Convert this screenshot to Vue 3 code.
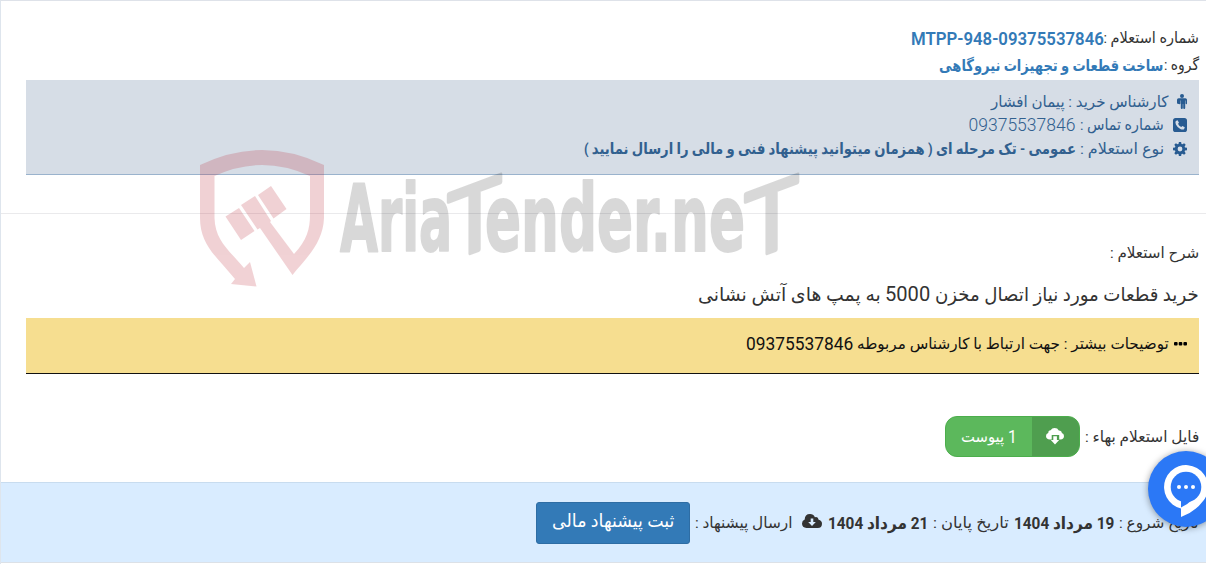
<script setup>
// Scales a run of text horizontally so that it takes the given width.
const vFit = {
  mounted(el, { value }) {
    const natural = el.offsetWidth
    if (!natural) return
    el.style.transform = `scaleX(${value / natural})`
    el.style.marginLeft = `${value - natural}px`
  },
}
</script>

<template>
  <main class="page" dir="rtl">
    <section class="head">
      <div class="line first">
        <span v-fit="95.5" class="run">شماره استعلام :</span>
        <span v-fit="193" class="run num code" dir="ltr">MTPP-948-09375537846</span>
      </div>
      <div class="line second">
        <span v-fit="35" class="run">گروه :</span>
        <b v-fit="224" class="run link">ساخت قطعات و تجهیزات نیروگاهی</b>
      </div>
      <div class="info">
        <div class="line">
          <svg class="icon person" width="10" height="15" viewBox="0 0 10 15"><circle cx="5" cy="2" r="2" /><path d="M1.6 4.300h6.800q1.600 0 1.600 1.500v3.600q0 .8-.7.8t-.7-.8V6.600h-.4v7.500q0 .9-1 .9t-1-.9v-4h-.4v4q0 .9-1 .9t-1-.9V6.600h-.4v2.800q0 .8-.7.8T0 9.400V5.800q0-1.500 1.600-1.500z" /></svg>
          <span v-fit="177" class="run">کارشناس خرید : پیمان افشار</span>
        </div>
        <div class="line">
          <svg class="icon wide" width="14" height="14" viewBox="0 0 14 14"><path fill-rule="evenodd" d="M2.600 0h8.800Q14 0 14 2.600v8.800q0 2.600-2.600 2.600H2.600Q0 14 0 11.400V2.600Q0 0 2.600 0zM4.600 2.200 2.800 3.100Q2 4.500 2.900 6.600q1.400 3 4.400 4.400 2.300 1 3.700.2l.8-1.900-2.400-1.400-1.200 1.100Q6 7.900 5 5.700l1-1z" /></svg>
          <span v-fit="84" class="run">شماره تماس :</span>
          <span v-fit="107" class="run num gap5">09375537846</span>
        </div>
        <div class="line">
          <svg class="icon wide" width="14" height="14" viewBox="0 0 14 14"><path fill-rule="evenodd" d="m5.900 0h2.200l.4 1.900 1 .4 1.600-1.100 1.600 1.600-1.100 1.600.4 1 2 .4v2.400l-2 .4-.4 1 1.100 1.600-1.600 1.600-1.600-1.100-1 .4-.4 1.900H5.900l-.4-1.900-1-.4-1.600 1.100-1.600-1.600 1.100-1.600-.4-1L0 8.200V5.800l2-.4.4-1-1.100-1.600 1.600-1.600 1.600 1.100 1-.4zM7 4.600a2.400 2.400 0 1 0 0 4.800 2.400 2.400 0 0 0 0-4.800z" /></svg>
          <span v-fit="84" class="run">نوع استعلام :</span>
          <b v-fit="492" class="run gap4">عمومی - تک مرحله ای ( همزمان میتوانید پیشنهاد فنی و مالی را ارسال نمایید )</b>
        </div>
      </div>
    </section>

    <section class="body">
      <div class="line about"><span v-fit="89" class="run">شرح استعلام :</span></div>
      <h1 class="line title">
        <span v-fit="264" class="run">خرید قطعات مورد نیاز اتصال مخزن</span>
        <span v-fit="45" class="run num gap5">5000</span>
        <span v-fit="183" class="run gap4">به پمپ های آتش نشانی</span>
      </h1>
      <div class="note">
        <svg class="dots" width="13" height="4" viewBox="0 0 13 4"><rect width="3.600" height="3.600" rx="1" /><rect x="4.700" width="3.600" height="3.600" rx="1" /><rect x="9.400" width="3.600" height="3.600" rx="1" /></svg>
        <span v-fit="312" class="run">توضیحات بیشتر : جهت ارتباط با کارشناس مربوطه</span>
        <span v-fit="107" class="run num gap4">09375537846</span>
      </div>
      <div class="line files">
        <span v-fit="114" class="run">فایل استعلام بهاء :</span>
        <button class="attach">
          <span class="attach-icon">
            <svg width="18" height="17" viewBox="0 0 18 17"><path d="M4 11.500Q0 11.200 0 8q0-2.600 2.300-3.100Q2.200 2.300 4.600 2.200 6 0 8.600 0q3 0 4.200 2.400 3 .1 3 2.700 2.200.5 2.200 3 0 3.300-3.600 3.400h-1.200V7H5.700v4.500z" fill="#fff" /><path d="M7.300 8.200h3.600V12h2.300L9 16.500 4.800 12h2.500z" fill="#fff" /></svg>
          </span>
          <span class="attach-text"><span v-fit="9" class="run num">1</span><span v-fit="43" class="run gap4">پیوست</span></span>
        </button>
      </div>
    </section>

    <footer class="foot line">
      <span v-fit="80" class="run">تاریخ شروع :</span>
      <b v-fit="100" class="run num gap5">19 مرداد 1404</b>
      <span v-fit="76" class="run gap5">تاریخ پایان :</span>
      <b v-fit="100" class="run num gap5">21 مرداد 1404</b>
      <svg class="cloud" width="20" height="14" viewBox="0 0 20 14"><path fill-rule="evenodd" d="M4.600 14Q0 13.800 0 9.600q0-2.900 2.700-4Q2.700 0 8 0q3.500 0 4.900 3.200 3.300-.9 3.700 2.500Q20 6.500 20 9.700q0 4.200-4.200 4.300zM8.700 4.500V8H6.200L10 12l3.800-4h-2.500V4.500z" /></svg>
      <span v-fit="97" class="run">ارسال پیشنهاد :</span>
      <button class="submit"><span v-fit="122" class="run">ثبت پیشنهاد مالی</span></button>
    </footer>

    <svg class="watermark" width="610" height="150" viewBox="195 143 610 150" direction="ltr">
      <g class="crest">
        <path d="M200 165Q262 135 324 165V218C323 243 307 257 292.500 275L260 228 257.500 229.500 241 205 255 196 271 221 270 222 294 254C307 240 310 229 310 215V176Q262 154 214.500 176V218C215 241 230 251 244 268L250 262 256.500 286.500 231 284 235 279C217 257 200 245 200 218Z" />
        <path d="M225.500 216.500 239 208 254.500 231 241 240ZM258 195 271 186 286.500 209 273.500 218.500Z" />
      </g>
      <g class="brand">
        <text x="340" y="251" textLength="112" lengthAdjust="spacingAndGlyphs">Aria</text>
        <text transform="translate(449 261) skewY(-20.500)" textLength="51" lengthAdjust="spacingAndGlyphs" class="tee">T</text>
        <text x="485" y="251" textLength="260" lengthAdjust="spacingAndGlyphs">ender.ne</text>
        <text transform="translate(746 261) skewY(-20.500)" textLength="51" lengthAdjust="spacingAndGlyphs" class="tee">T</text>
      </g>
    </svg>

    <div class="chat">
      <svg width="76" height="76" viewBox="0 0 76 76"><path d="M33 57.500A22 22 0 1 1 55.500 49.500Q47 61 33 66Z" fill="#fff" /><circle cx="38" cy="36" r="15.300" fill="#2b78f6" /><path d="M33 49v7.500q6-2.500 11-7.500z" fill="#2b78f6" /><circle cx="31" cy="36" r="2" fill="#fff" /><circle cx="38" cy="36" r="2" fill="#fff" /><circle cx="45" cy="36" r="2" fill="#fff" /></svg>
    </div>
  </main>
</template>

<style>
body { overflow: hidden; background: #fff; }
</style>

<style scoped>
.page { position: relative; box-sizing: border-box; width: 1206px; height: 564px; overflow: hidden; border-top: 1px solid #dee2e9; border-left: 1px solid #dee5ed; color: #333; font: 15.500px Roboto, "DejaVu Sans", sans-serif; }
.line { display: flex; align-items: center; white-space: nowrap; }
.run { display: block; flex: none; white-space: nowrap; transform-origin: right center; }
.num { font-size: 17.500px; }
.gap4 { margin-right: 4px; }
.gap5 { margin-right: 5px; }
.link, .code { color: #337ab7; }
.link { font-size: 16px; }
.code { font-size: 18px; font-weight: 600; }
.head { box-sizing: border-box; height: 213px; padding: 23px 7px 0 25px; border-bottom: 1px solid #eaeaec; }
.first { height: 28px; }
.second { height: 28px; padding-bottom: 2px; box-sizing: border-box; }
.info { box-sizing: border-box; height: 95px; padding: 10px 12px 0; background: #d6dde6; border-bottom: 1px solid #9ab3cd; color: #31608f; }
.info .num { font-weight: 350; }
.info .line { height: 23.600px; }
.icon { flex: none; fill: #285b91; }
.person { margin-left: 9px; }
.wide { margin-left: 9px; }
.body { box-sizing: border-box; height: 268px; padding: 27px 7px 0 25px; }
.about { height: 24px; }
.title { height: 30px; margin: 14px 0 0; font-size: 19px; font-weight: 400; }
.title .num { font-size: 21px; }
.note { display: flex; align-items: center; box-sizing: border-box; height: 56px; margin-top: 9px; padding: 0 12px 3px; background: #f6de90; border-bottom: 1px solid #111; color: #111; }
.dots { margin-left: 5px; }
.files { margin-top: 42px; }
.attach { display: flex; box-sizing: border-box; width: 135px; height: 41px; margin: 0 5px 0 0; padding: 0; overflow: hidden; border: 1px solid #4cae4c; border-radius: 12px; background: #5cb85c; color: #fff; font: inherit; }
.attach-icon { display: flex; align-items: center; justify-content: center; width: 47px; background: #4f9e4f; }
.attach-text { display: flex; flex: 1; align-items: center; padding-right: 15px; }
.foot { box-sizing: border-box; height: 81px; padding: 0 7px; border-top: 1px solid #c8dcef; border-bottom: 1px solid #dce1e7; background: #d9ecff; }
.cloud { margin: 0 7px 3px 8px; margin-left: 9px; margin-right: 6px; fill: #333; }
.foot b.num { font-size: 17px; font-weight: 700; }
.submit { display: flex; align-items: center; justify-content: center; box-sizing: border-box; width: 154px; height: 42px; margin: 0 5px 0 0; padding: 0 15px 4px; border: 1px solid #2e6da4; border-radius: 3px; background: #337ab7; color: #fff; font: inherit; font-size: 18px; }
.watermark { position: absolute; left: 194px; top: 142px; pointer-events: none; }
.crest { fill: #b91e2d; opacity: .2; }
.brand { fill: #000; stroke: #000; stroke-width: 2; stroke-linejoin: round; opacity: .15; font: bold 92px "DejaVu Sans Condensed", "DejaVu Sans", sans-serif; }
.tee { font-size: 92px; font-weight: 400; font-stretch: normal; stroke-width: 4; }
.chat { position: absolute; left: 1147px; top: 450px; width: 76px; height: 76px; border-radius: 50%; background: #2b78f6; box-shadow: 0 1px 7px rgba(0, 0, 0, .4); }
</style>
